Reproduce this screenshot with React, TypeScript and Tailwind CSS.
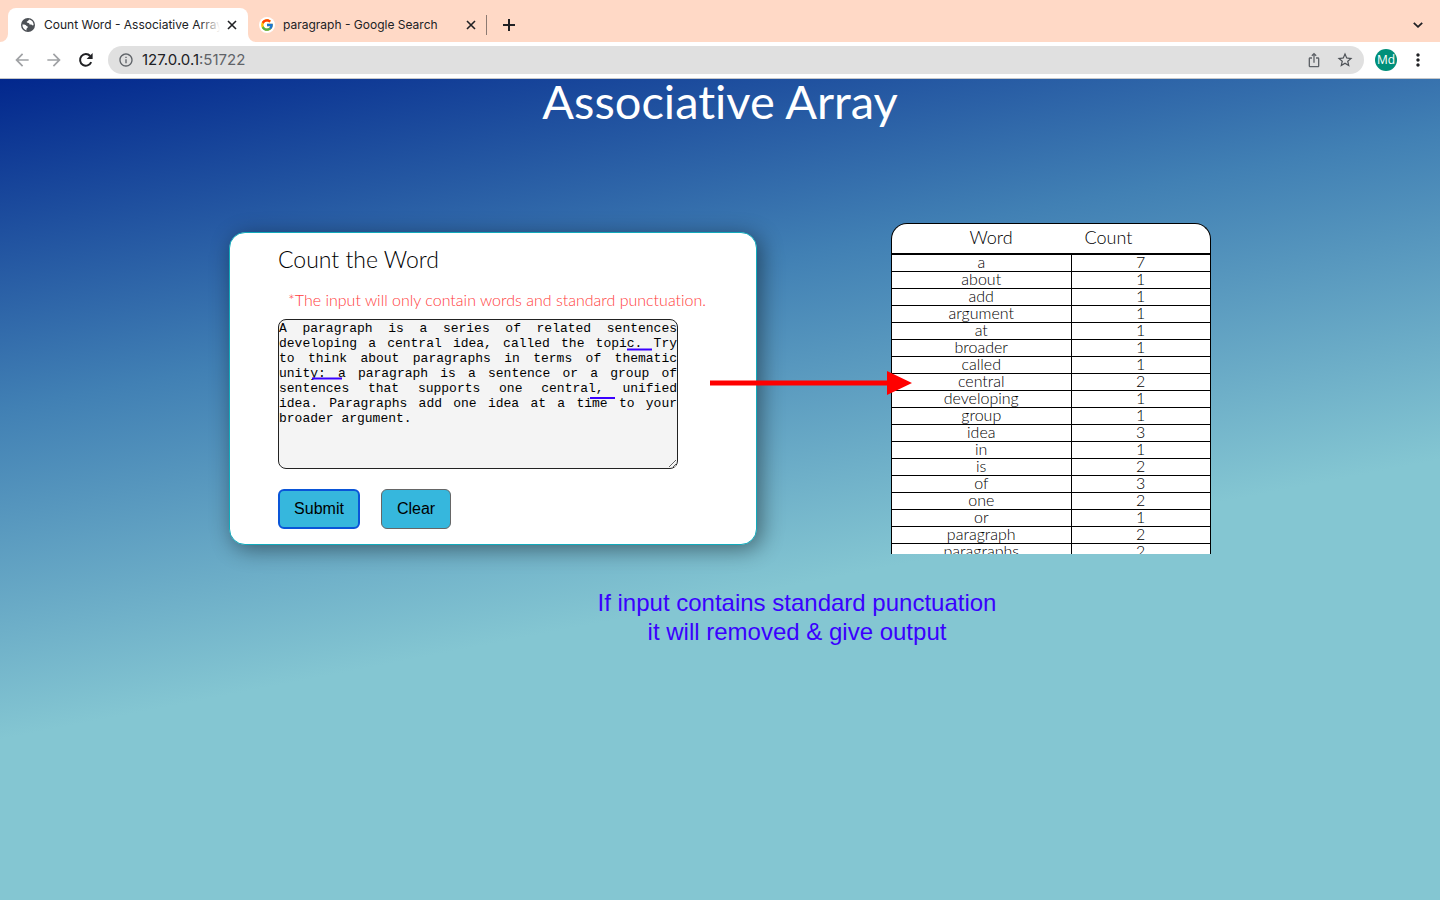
import React from "react";
import { FcGoogle } from "react-icons/fc";
import {
  MdArrowBack,
  MdArrowForward,
  MdInfoOutline,
  MdStarBorder,
  MdIosShare,
  MdMoreVert,
} from "react-icons/md";

const counts: [string, number][] = [
  ["a", 7],
  ["about", 1],
  ["add", 1],
  ["argument", 1],
  ["at", 1],
  ["broader", 1],
  ["called", 1],
  ["central", 2],
  ["developing", 1],
  ["group", 1],
  ["idea", 3],
  ["in", 1],
  ["is", 2],
  ["of", 3],
  ["one", 2],
  ["or", 1],
  ["paragraph", 2],
  ["paragraphs", 2],
];

const paragraph =
  "A paragraph is a series of related sentences developing a central idea, called the topic. Try to\u00a0think about paragraphs in terms of thematic unity: a paragraph is a sentence or a group of sentences that supports one central, unified idea.\u00a0Paragraphs add one idea at a time to your broader argument.";

function CloseIcon() {
  return (
    <svg width="10" height="10" viewBox="0 0 10 10" fill="none" stroke="currentColor" strokeWidth="1.6" aria-hidden="true">
      <path d="M1 1L9 9M9 1L1 9" />
    </svg>
  );
}

function GlobeIcon() {
  return (
    <svg className="shrink-0" width="16" height="16" viewBox="0 0 16 16" aria-hidden="true">
      <circle cx="8" cy="8" r="7" fill="#4d5156" />
      <path
        d="M9.2 2.4C8.2 3 8.6 3.9 7.4 4.2C6.4 4.5 6.6 5.6 7.6 5.8C9 6 9.6 6.6 9.6 7.6C10.4 8 11.6 7.6 12.4 8.2C13 8.6 13.4 8.4 13.6 7.8C13.6 5.2 11.8 2.8 9.2 2.4Z"
        fill="#fff"
      />
      <path
        d="M2.4 7.6C3.6 7.4 5.4 7.6 6.2 8.4C6.6 9.2 7.8 9 7.9 10C7.9 11 6.6 11.2 6.4 12.2C6.4 12.8 6.6 13.2 6.4 13.5C4 12.8 2.2 10.4 2.4 7.6Z"
        fill="#fff"
      />
    </svg>
  );
}

function TabStrip() {
  return (
    <div className="flex h-[42px] items-end bg-[#ffd9c6] text-xs text-[#202124]">
      <div className="relative ml-2 flex h-[34px] w-60 items-center rounded-t-lg bg-white pl-3">
        <svg className="absolute bottom-0 -left-2 h-2 w-2" viewBox="0 0 8 8" aria-hidden="true">
          <path d="M8 0V8H0A8 8 0 0 0 8 0Z" fill="#fff" />
        </svg>
        <svg className="absolute -right-2 bottom-0 h-2 w-2" viewBox="0 0 8 8" aria-hidden="true">
          <path d="M0 0V8H8A8 8 0 0 1 0 0Z" fill="#fff" />
        </svg>
        <GlobeIcon />
        <div className="relative ml-2 w-[176px] overflow-hidden whitespace-nowrap">
          Count Word - Associative Array
          <span className="absolute inset-y-0 right-0 w-5 bg-linear-to-r from-transparent to-white" />
        </div>
        <button type="button" aria-label="Close tab" className="ml-1 flex size-4 items-center justify-center">
          <CloseIcon />
        </button>
      </div>
      <div className="flex h-[34px] w-[238px] items-center pl-[11px]">
        <span className="flex size-4 shrink-0 items-center justify-center rounded-full bg-white">
          <FcGoogle className="size-3.5" />
        </span>
        <span className="ml-2 w-[180px] whitespace-nowrap">paragraph - Google Search</span>
        <button type="button" aria-label="Close tab" className="flex size-4 items-center justify-center">
          <CloseIcon />
        </button>
      </div>
      <span className="mb-[7px] h-5 w-px bg-[#8c7a72]" />
      <button type="button" aria-label="New tab" className="ml-3 flex h-[34px] w-5 items-center justify-center">
        <svg width="12" height="12" viewBox="0 0 12 12" stroke="currentColor" strokeWidth="2" aria-hidden="true">
          <path d="M6 0V12M0 6H12" />
        </svg>
      </button>
      <button type="button" aria-label="Search tabs" className="mr-3 ml-auto flex h-[34px] w-5 items-center justify-center">
        <svg width="10" height="6" viewBox="0 0 10 6" fill="none" stroke="currentColor" strokeWidth="1.8" aria-hidden="true">
          <path d="M0.8 0.8L5 4.8L9.2 0.8" />
        </svg>
      </button>
    </div>
  );
}

function Toolbar() {
  return (
    <div className="flex h-[37px] items-center border-b border-[#c4c6c9] bg-white px-3">
      <button type="button" aria-label="Back" className="mr-3 text-[#a0a2a5]">
        <MdArrowBack className="size-5" />
      </button>
      <button type="button" aria-label="Forward" className="mr-3 text-[#a0a2a5]">
        <MdArrowForward className="size-5" />
      </button>
      <button type="button" aria-label="Reload" className="mr-3 flex size-5 items-center justify-center text-[#202124]">
        <svg width="16" height="16" viewBox="0 0 16 16" aria-hidden="true">
          <path d="M13.2 10.2A5.8 5.8 0 1 1 12.2 4" fill="none" stroke="currentColor" strokeWidth="2" />
          <path d="M14.6 1V7H8.6Z" fill="currentColor" />
        </svg>
      </button>
      <div className="flex h-7 flex-1 items-center rounded-full bg-[#e0e0e0] px-2.5 text-[15px] text-[#5f6368]">
        <MdInfoOutline className="mr-2 size-4" />
        <a href="#" className="flex-1">
          <span className="text-[#202124]">127.0.0.1</span>:51722
        </a>
        <MdIosShare className="mr-3.5 size-4" />
        <MdStarBorder className="size-[18px] text-[#4d5156]" />
      </div>
      <span className="ml-[11px] flex size-[22px] items-center justify-center rounded-full bg-[#008f7a] font-['Open_Sans',sans-serif] text-xs text-white">
        Md
      </span>
      <button type="button" aria-label="Menu" className="ml-[11px] text-[#202124]">
        <MdMoreVert className="size-5" />
      </button>
    </div>
  );
}

function WordForm() {
  return (
    <form
      className="h-[313px] w-[528px] rounded-2xl border border-[#12aabb] bg-white pl-12 shadow-[4px_4px_22px_rgba(0,0,0,0.45)]"
      onSubmit={(e) => e.preventDefault()}
    >
      <h2 className="pt-3 text-[23px] leading-7">Count the Word</h2>
      <label
        htmlFor="words"
        className="mt-[15px] block pl-2.5 text-base leading-6 whitespace-nowrap text-[#ff3c3c]"
      >
        *The input will only contain words and standard punctuation.
      </label>
      <div className="relative mt-[7px] w-[400px]">
        <textarea
          id="words"
          spellCheck={false}
          defaultValue={paragraph}
          className="block h-[150px] w-full overflow-hidden rounded-lg border border-[#222] bg-[#f4f4f4] px-0 pt-px text-justify font-['Liberation_Mono',monospace] text-[13px] leading-[15px] text-black"
        />
        <svg className="pointer-events-none absolute inset-0" width="400" height="150" aria-hidden="true">
          <path d="M349 30.5H374M34 59.5H64M312 79H337" stroke="#3a00ff" strokeWidth="2" />
        </svg>
      </div>
      <div className="mt-5 flex gap-[21px] font-['Liberation_Sans',sans-serif] text-base">
        <button type="submit" className="h-10 w-[82px] rounded-md border-2 border-[#0a55d8] bg-[#36b7dd]">
          Submit
        </button>
        <button type="reset" className="h-10 w-[70px] rounded-md border border-[#666] bg-[#36b7dd]">
          Clear
        </button>
      </div>
    </form>
  );
}

function CountTable() {
  return (
    <div className="h-[331px] w-80 overflow-hidden rounded-t-2xl border border-b-0 border-black bg-white">
      <table className="w-full table-fixed border-collapse text-center text-base leading-[14px]">
        <colgroup>
          <col className="w-[179px]" />
          <col />
        </colgroup>
        <thead>
          <tr className="h-[30px] border-b-2 border-black align-top text-lg leading-[26px]">
            <th className="py-0 pr-0 pl-[19px] font-light">Word</th>
            <th className="py-0 pr-16 pl-0 font-light">Count</th>
          </tr>
        </thead>
        <tbody className="align-top">
          {counts.map(([word, count]) => (
            <tr key={word} className="h-[17px] border-b border-black">
              <td className="border-r border-black p-0">{word}</td>
              <td className="p-0">{count}</td>
            </tr>
          ))}
        </tbody>
      </table>
    </div>
  );
}

export default function App() {
  return (
    <div className="flex min-h-screen flex-col font-['Inter',sans-serif]">
      <header>
        <TabStrip />
        <Toolbar />
      </header>
      <main className="flex-1 bg-[linear-gradient(169deg,#02278d_0%,#4180b4_30%,#84c6d2_60%)] font-['Lato',sans-serif] font-light text-black [font-variant-ligatures:none]">
        <h1 className="text-center text-[47px] leading-[44px] font-normal text-white">Associative Array</h1>
        <div className="relative mx-auto mt-[100px] flex w-fit items-center gap-[134px]">
          <WordForm />
          <CountTable />
          <svg
            className="pointer-events-none absolute top-[147px] left-[480px]"
            width="204"
            height="26"
            aria-hidden="true"
          >
            <path d="M1 10.5H178V1L203 13L178 25V15.5H1Z" fill="#ff0000" />
          </svg>
        </div>
        <p className="mt-[34px] pl-[154px] text-center font-['Liberation_Sans',sans-serif] text-2xl leading-[29px] font-normal text-[#3a00ff]">
          If input contains standard punctuation
          <br />
          it will removed &amp; give output
        </p>
      </main>
    </div>
  );
}
